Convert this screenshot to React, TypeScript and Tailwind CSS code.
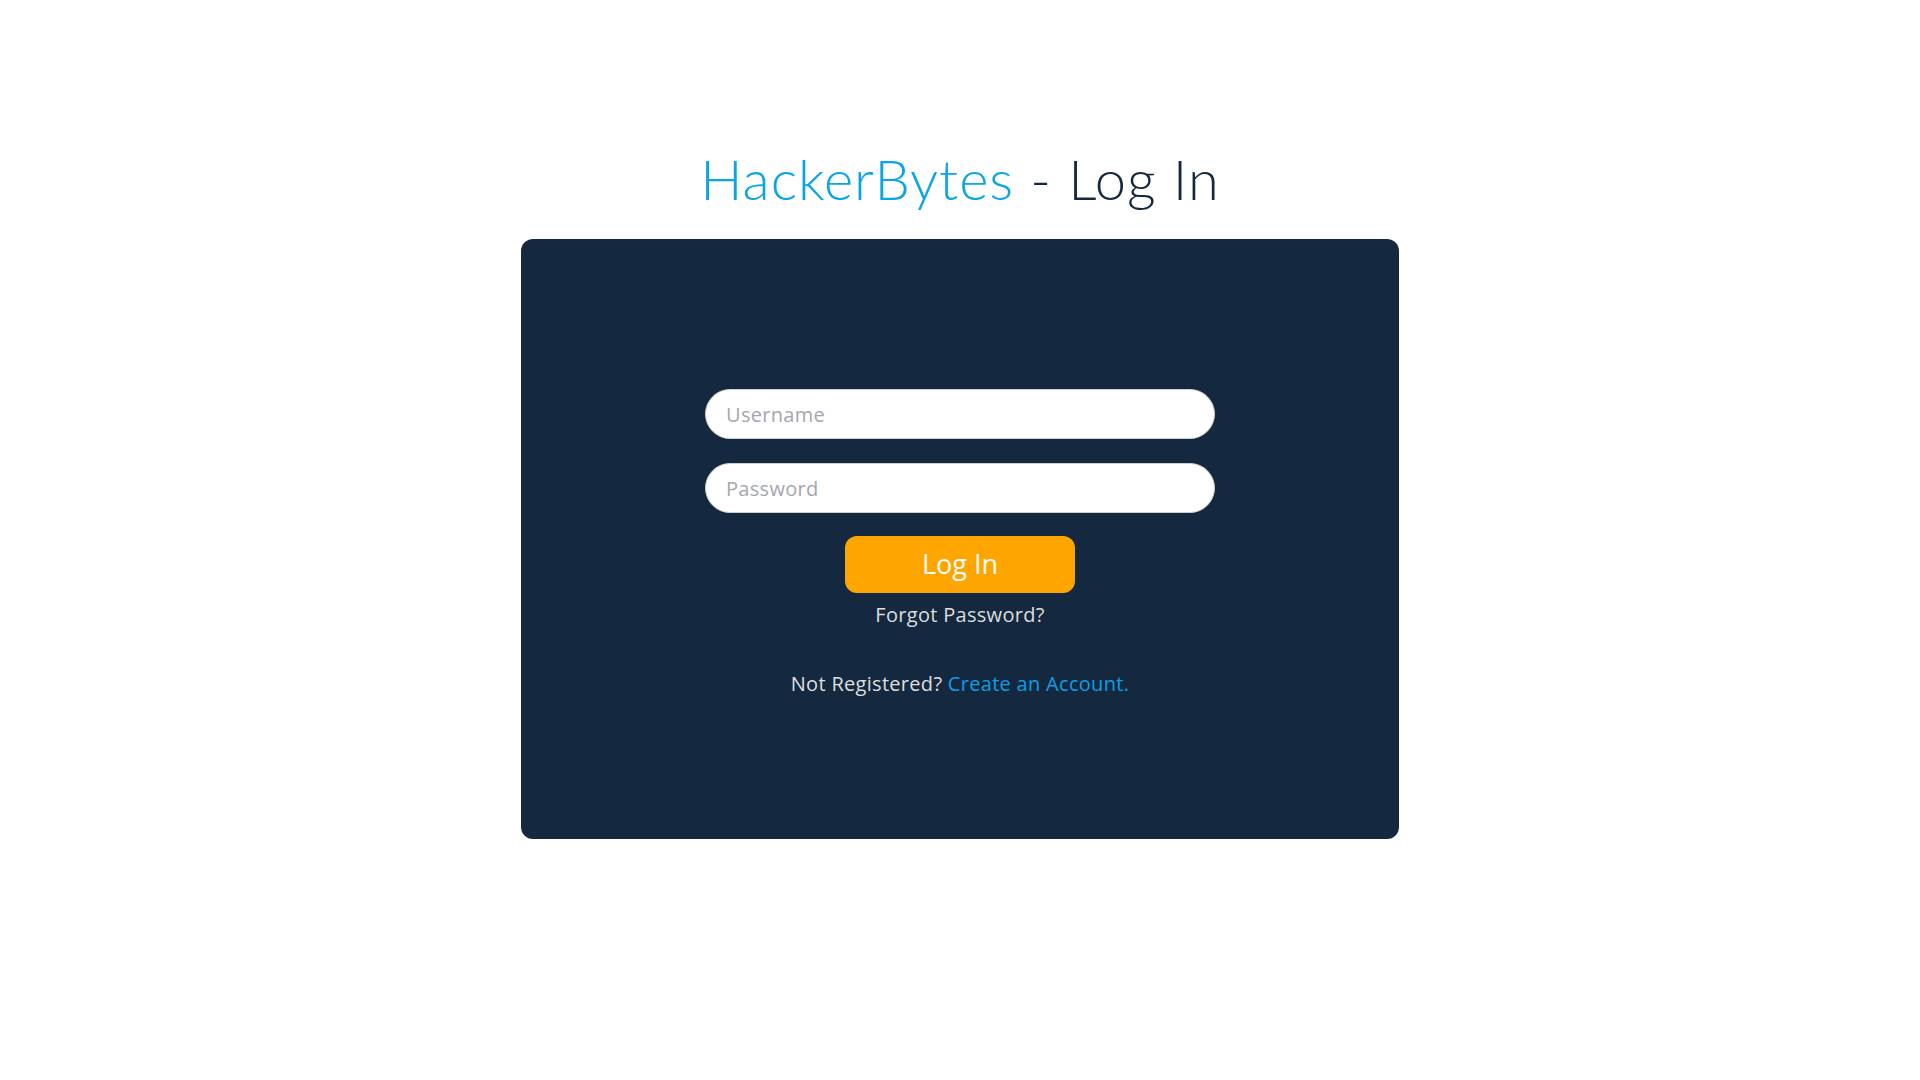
export default function App() {
  return (
    <div className="min-h-screen w-full bg-white font-['Open_Sans','Liberation_Sans',sans-serif]">
      <div className="flex flex-col items-center pt-[145px]">
        <h1 className="font-['Lato','Liberation_Sans',sans-serif] text-[56px] font-light leading-[67px] tracking-[1px]">
          <span className="text-[#0aa5e4]">HackerBytes</span>
          <span className="text-[#14293f]"> - Log In</span>
        </h1>

        <div className="mt-[27px] flex h-[600px] w-[878px] flex-col items-center justify-center rounded-[12px] bg-[#14293f] pt-[9px]">
          <form className="flex flex-col items-center" onSubmit={(e) => e.preventDefault()}>
            <input
              type="text"
              placeholder="Username"
              className="h-[50px] w-[510px] rounded-full border border-[#cfcfcf] bg-white px-[20px] text-[20px] tracking-[0.3px] text-[#333] placeholder:text-[#a3a7ad] focus:outline-none"
            />
            <input
              type="password"
              placeholder="Password"
              className="mt-[24px] h-[50px] w-[510px] rounded-full border border-[#cfcfcf] bg-white px-[20px] text-[20px] tracking-[0.3px] text-[#333] placeholder:text-[#a3a7ad] focus:outline-none"
            />
            <button
              type="submit"
              className="mt-[23px] h-[57px] w-[230px] rounded-[12px] bg-[#ffa500] text-[27px] text-white"
            >
              Log In
            </button>
            <a href="#" className="mt-[8px] text-[20px] leading-[28px] tracking-[0.3px] text-[#dedede]">
              Forgot Password?
            </a>
            <p className="mt-[41px] text-[20px] leading-[28px] tracking-[0.3px] text-[#dedede]">
              Not Registered?{' '}
              <a href="#" className="text-[#0d9ee6]">
                Create an Account.
              </a>
            </p>
          </form>
        </div>
      </div>
    </div>
  );
}
